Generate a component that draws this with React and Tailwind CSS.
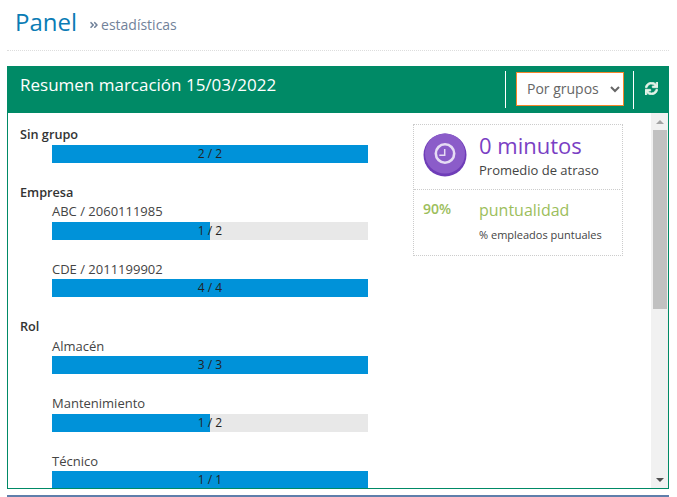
import { FaSync, FaAngleDoubleRight } from "react-icons/fa";

const groups = [
    { name: "Empresa", items: [["ABC / 2060111985", 1, 2], ["CDE / 2011199902", 4, 4]] },
    { name: "Rol", items: [["Almacén", 3, 3], ["Mantenimiento", 1, 2], ["Técnico", 1, 1]] },
];

function Bar({ done, total }) {
    return (
        <div className="relative h-[18px] w-[316px] bg-[#e8e8e8]">
            <div className="h-full bg-[#0092d9]" style={{ width: `${(done / total) * 100}%` }}></div>
            <span className="absolute inset-0 text-center text-xs leading-[18px] text-[#222]">{done} / {total}</span>
        </div>
    );
}

function ClockBadge() {
    return (
        <svg width="44" height="44" viewBox="0 0 44 44" className="shrink-0">
            <circle cx="22" cy="22" r="21.5" fill="#6f3db8" />
            <circle cx="22" cy="20.5" r="20" fill="#8b5cc9" />
            <circle cx="22" cy="20.5" r="9.2" fill="none" stroke="#e6dcf4" strokeWidth="2.6" />
            <path d="M21.7 16v6.3h-5.4" fill="none" stroke="#e6dcf4" strokeWidth="1.5" />
        </svg>
    );
}

function ScrollBar() {
    return (
        <div className="flex w-[17px] shrink-0 flex-col items-center bg-[#f1f1f1]">
            <div className="flex h-[17px] items-center justify-center">
                <div className="h-0 w-0 border-x-[4px] border-b-[4px] border-x-transparent border-b-[#a3a3a3]"></div>
            </div>
            <div className="h-[179px] w-[14px] bg-[#c1c1c1]"></div>
            <div className="flex-1"></div>
            <div className="flex h-[17px] items-center justify-center">
                <div className="h-0 w-0 border-x-[4px] border-t-[4px] border-x-transparent border-t-[#505050]"></div>
            </div>
        </div>
    );
}

export default function App() {
    return (
        <div className="h-[497px] overflow-hidden bg-white pl-[7px] pr-[8px] font-['Open_Sans',sans-serif] text-[13px] text-[#333]">
            <div className="flex h-[51px] items-start border-b border-dotted border-[#ddd] pl-[8px] pt-[4px]">
                <h1 className="text-2xl leading-[36px] text-[#0a7cb5]">Panel</h1>
                <span className="ml-3 mt-[3px] flex items-center text-sm leading-[36px] text-[#71829a]">
                    <FaAngleDoubleRight className="mr-[2px] text-[10px]" />
                    estadísticas
                </span>
            </div>

            <div className="mt-[15px] flex h-[47px] items-center bg-[#008a66] pl-[13px] text-white">
                <h2 className="mb-[9px] flex-1 text-[17px] leading-[24px]">Resumen marcación 15/03/2022</h2>
                <div className="mb-[1px] h-[37px] w-px bg-white"></div>
                <select defaultValue="grupos" className="mb-[2px] ml-[10px] h-[34px] w-[108px] border border-[#f5852a] bg-white pl-[6px] text-sm text-[#666] outline-none">
                    <option value="grupos">Por grupos</option>
                </select>
                <div className="ml-[9px] h-[38px] w-px bg-white"></div>
                <div className="mb-[2px] flex w-[35px] justify-center">
                    <FaSync className="stroke-[30] text-[13px] text-[#e4f3e8]" />
                </div>
            </div>

            <div className="flex h-[376px] overflow-hidden border border-t-0 border-[#008a66]">
                <div className="flex flex-1 items-start gap-[45px] overflow-hidden pl-[12px] pt-[11px]">
                    <div className="w-[348px]">
                        <div className="mb-[1px] text-[12.7px] font-semibold leading-[20px] text-[#333]">Sin grupo</div>
                        <div className="mb-[19.6px] pl-8"><Bar done={2} total={2} /></div>
                        {groups.map((g) => (
                            <div key={g.name}>
                                <div className="text-[12.7px] font-semibold leading-[19.4px]">{g.name}</div>
                                <div className="pl-8">
                                    {g.items.map(([label, done, total]) => (
                                        <div key={label} className="mb-[19.45px]">
                                            <div className="-mt-[0.6px] mb-[0.6px] leading-[20px] text-[#444]">{label}</div>
                                            <Bar done={done} total={total} />
                                        </div>
                                    ))}
                                </div>
                            </div>
                        ))}
                    </div>

                    <div className="w-[210px] shrink-0 border border-dotted border-[#ccc]">
                        <div className="flex h-[65px] gap-3 border-b border-dotted border-[#ccc] pl-[9px] pt-[8px]">
                            <ClockBadge />
                            <div>
                                <div className="-mt-[2px] text-[22px] leading-[28px] text-[#7a3fc4]">0 minutos</div>
                                <div className="mt-[2px] leading-[18px] text-[#444]">Promedio de atraso</div>
                            </div>
                        </div>
                        <div className="flex h-[65px] pl-[9px] pt-[9px]">
                            <div className="w-[56px] text-sm font-semibold leading-[20px] text-[#9cbe5c]">90%</div>
                            <div>
                                <div className="text-base leading-[22px] text-[#9cbe5c]">puntualidad</div>
                                <div className="mt-[6px] text-[11px] leading-[16px] text-[#444]">% empleados puntuales</div>
                            </div>
                        </div>
                    </div>
                </div>
                <ScrollBar />
            </div>

            <div className="mt-[6px] h-[2px] bg-[#5f7fab]"></div>
        </div>
    );
}
